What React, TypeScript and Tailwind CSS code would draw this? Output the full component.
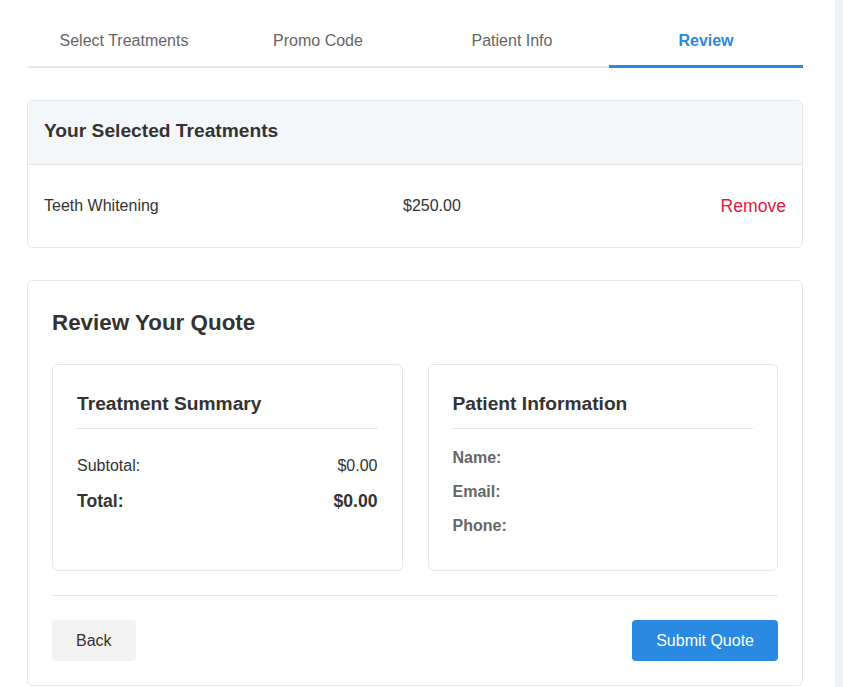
const tabs = ["Select Treatments", "Promo Code", "Patient Info", "Review"];

export default function App() {
  const active = 3;

  return (
    <div className="flex min-h-[687px] w-full bg-white font-['Liberation_Sans',Arial,sans-serif] text-[#333]">
      <div className="flex-1 pl-[27px] pr-[32px]">
        {/* step tabs */}
        <div className="flex border-b-2 border-[#e8e8e8]">
          {tabs.map((t, i) => (
            <div
              key={t}
              className={
                i === active
                  ? "flex-1 pt-[32px] pb-[15px] -mb-[2px] border-b-[3px] border-[#2a8ae2] text-center text-[16px] leading-[18px] font-bold text-[#2a8ae2]"
                  : "flex-1 pt-[32px] pb-[16px] text-center text-[16px] leading-[18px] text-[#666]"
              }
            >
              {t}
            </div>
          ))}
        </div>

        {/* selected treatments */}
        <div className="mt-[32px] rounded-md border border-[#e6e6e6] overflow-hidden">
          <div className="bg-[#f4f7fa] border-b border-[#e6e6e6] px-4 pt-[18px] pb-[21px]">
            <h2 className="text-[19.2px] leading-[24px] font-bold">Your Selected Treatments</h2>
          </div>
          <div className="grid grid-cols-[359px_1fr_auto] items-center px-4 pt-[30px] pb-[30px] text-[16px] leading-[22px]">
            <span>Teeth Whitening</span>
            <span>$250.00</span>
            <button className="text-[#e5173e] text-[17.6px]">Remove</button>
          </div>
        </div>

        {/* review card */}
        <div className="mt-[32px] mb-[1px] rounded-md border border-[#e6e6e6] p-6">
          <h2 className="text-[22.4px] leading-[30px] font-bold mt-[3px]">Review Your Quote</h2>

          <div className="mt-[26px] grid grid-cols-2 gap-[25px]">
            <div className="rounded-md border border-[#e6e6e6] px-6 pt-[27px] pb-6">
              <h3 className="border-b border-[#e6e6e6] pb-3 text-[19.2px] leading-[24px] font-bold">
                Treatment Summary
              </h3>
              <div className="mt-[25px] flex flex-col gap-[11px]">
                <div className="flex justify-between text-[16px] leading-[24px]">
                  <span>Subtotal:</span>
                  <span>$0.00</span>
                </div>
                <div className="flex justify-between text-[17.6px] leading-[24px] font-bold">
                  <span>Total:</span>
                  <span>$0.00</span>
                </div>
              </div>
            </div>

            <div className="rounded-md border border-[#e6e6e6] px-6 pt-[27px] pb-6">
              <h3 className="border-b border-[#e6e6e6] pb-3 text-[19.2px] leading-[24px] font-bold">
                Patient Information
              </h3>
              <div className="mt-[17px] flex flex-col gap-[10px] text-[16px] leading-[24px] font-bold text-[#666]">
                <div>Name:</div>
                <div>Email:</div>
                <div className="mb-[8px]">Phone:</div>
              </div>
            </div>
          </div>

          <div className="mt-[24px] border-t border-[#e6e6e6] pt-6 flex justify-between">
            <button className="h-[41px] rounded bg-[#f3f3f3] px-6 text-[16px] text-[#333]">Back</button>
            <button className="h-[41px] rounded bg-[#2a8ae2] px-6 text-[16px] text-white">Submit Quote</button>
          </div>
        </div>
      </div>
      <div className="w-[8px] bg-[#eef1f5]" />
    </div>
  );
}
